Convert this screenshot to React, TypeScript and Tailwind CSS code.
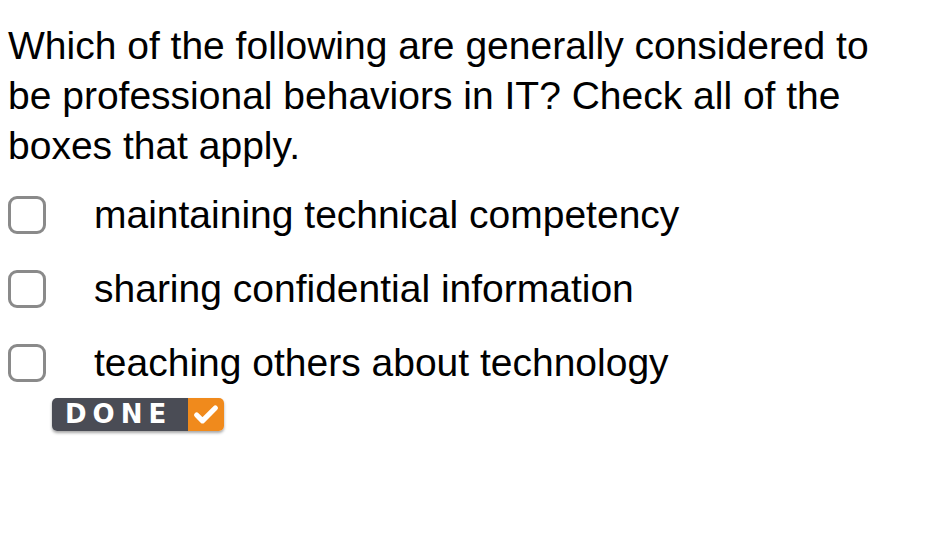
import { Check } from 'lucide-react';

const options = [
  'maintaining technical competency',
  'sharing confidential information',
  'teaching others about technology',
];

export default function App() {
  return (
    <div className="w-[932px] h-[544px] bg-white text-black pl-[8px] pt-[21px]" style={{ fontFamily: '"Liberation Sans", Arial, sans-serif' }}>
      <p className="text-[39px] leading-[50px] whitespace-nowrap">
        Which of the following are generally considered to<br />
        be professional behaviors in IT? Check all of the<br />
        boxes that apply.
      </p>

      <div className="mt-[25px] flex flex-col gap-[36px]">
        {options.map(o => (
          <div key={o} className="flex items-center h-[38px]">
            <div className="w-[38px] h-[38px] rounded-[9px] border-[3px] border-[#8a8a8a] bg-white shrink-0" />
            <span className="ml-[48px] text-[39px] leading-[38px]">{o}</span>
          </div>
        ))}
      </div>

      {/* кнопка DONE */}
      <div className="ml-[44px] mt-[16px] flex w-[172px] h-[33px] rounded-[5px] overflow-hidden shadow-[0_2px_3px_rgba(0,0,0,0.35)]">
        <div className="flex-1 bg-[#4a4c55] flex items-center pl-[13px] text-white font-bold text-[26px] tracking-[6px]" style={{ fontFamily: '"DejaVu Sans", sans-serif' }}>
          DONE
        </div>
        <div className="w-[36px] bg-[#f08a1c] flex items-center justify-center">
          <Check className="w-[28px] h-[28px] text-white" strokeWidth={4.5} />
        </div>
      </div>
    </div>
  );
}
